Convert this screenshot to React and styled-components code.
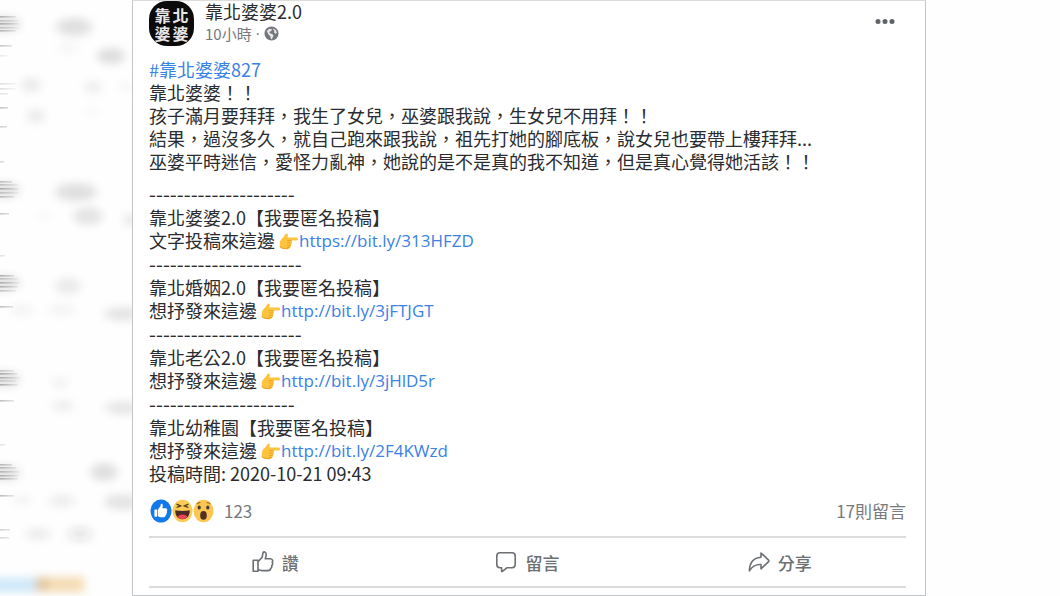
import React from 'react';
import styled, { createGlobalStyle } from 'styled-components';

const colors = {
  text: '#2a2c2f',
  muted: '#76797d',
  link: '#3a82e4',
  rule: '#dadbdd',
};

const GlobalStyle = createGlobalStyle`
  body {
    margin: 0;
    background: #fefefe;
    color: ${colors.text};
    font-family: 'Noto Sans CJK TC', 'Noto Sans', sans-serif;
    font-size: 18px;
    line-height: 23px;
  }
`;

const Page = styled.div`
  display: grid;
  grid-template-columns: 132px minmax(0, 1fr) 134px;
  align-items: start;
`;

const BackdropArt = styled.svg`
  display: block;
  width: 100%;
`;

const Card = styled.article`
  padding: 0 19px 7px 16px;
  background: #fff;
  border: 1px solid #c4c5c7;
  border-top-color: #dcdcdc;
`;

const Header = styled.header`
  display: flex;
  align-items: flex-start;
  height: 47px;
`;

const Avatar = styled.div`
  display: grid;
  grid-template-columns: 18px 18px;
  place-content: center;
  justify-items: center;
  width: 45px;
  height: 45px;
  margin-right: 11px;
  border-radius: 18px;
  background: #0b0b0b;
  color: #e6e6e6;
  font-size: 16px;
  font-weight: 700;
  line-height: 18px;
`;

const Author = styled.div`
  flex: 1;
`;

const Name = styled.h1`
  margin: 0;
  font-size: 18px;
  font-weight: 400;
  line-height: 20px;
`;

const Meta = styled.div`
  display: flex;
  align-items: center;
  gap: 4px;
  color: ${colors.muted};
  font-size: 15px;
  line-height: 25px;
`;

const Separator = styled.span`
  font-family: 'Open Sans', sans-serif;
`;

const MoreButton = styled.button`
  display: flex;
  margin: 0;
  padding: 16px 11px 8px;
  border: 0;
  background: none;
`;

const Message = styled.section`
  margin-top: ${(props) => props.$gap}px;
`;

const Line = styled.p`
  display: flex;
  flex-wrap: wrap;
  align-items: center;
  margin: 0;
  white-space: pre-wrap;
`;

const Divider = styled.p`
  margin: 0;
  font-size: 20px;
  line-height: 24px;
`;

const Link = styled.a`
  color: ${colors.link};
  text-decoration: none;
`;

const UrlLink = styled(Link)`
  font-family: 'Open Sans', 'Noto Sans', sans-serif;
  font-size: 17px;
`;

const Stats = styled.div`
  display: flex;
  align-items: center;
  height: 51px;
  color: ${colors.muted};
  font-size: 17px;
`;

const Reactions = styled.div`
  display: flex;
  flex: 1;
  align-items: center;
  padding-left: 1px;
`;

const Count = styled.span`
  margin-left: 10px;
`;

const Actions = styled.div`
  display: grid;
  grid-template-columns: repeat(3, 1fr);
  border-top: 2px solid ${colors.rule};
  border-bottom: 2px solid ${colors.rule};
`;

const ActionButton = styled.button`
  display: flex;
  align-items: center;
  justify-content: center;
  gap: 8px;
  height: 48px;
  padding: 0;
  border: 0;
  background: none;
  color: #6c6f73;
  font-family: inherit;
  font-size: 17px;
  font-weight: 500;
`;

// cx, cy, rx, ry, opacity
const smudges = [
  [74, 27, 18, 9, 0.12],
  [68, 48, 10, 6, 0.03],
  [111, 56, 14, 8, 0.13],
  [31, 85, 10, 7, 0.08],
  [93, 87, 9, 7, 0.06],
  [126, 87, 7, 5, 0.03],
  [36, 116, 9, 7, 0.08],
  [92, 112, 7, 4, 0.03],
  [76, 192, 21, 9, 0.12],
  [88, 216, 15, 9, 0.1],
  [44, 216, 8, 4, 0.03],
  [130, 220, 6, 6, 0.1],
  [68, 286, 13, 8, 0.08],
  [62, 310, 14, 6, 0.04],
  [22, 310, 12, 6, 0.04],
  [122, 314, 18, 7, 0.1],
  [60, 383, 8, 6, 0.05],
  [63, 406, 11, 6, 0.06],
  [122, 408, 17, 7, 0.09],
  [104, 472, 14, 9, 0.12],
  [62, 501, 13, 6, 0.07],
  [22, 500, 10, 5, 0.04],
  [122, 502, 18, 8, 0.1],
  [38, 534, 13, 6, 0.07],
  [80, 534, 12, 7, 0.11],
];

// y, length, opacity
const streaks = [
  [17, 16, 0.55], [21, 18, 0.35], [24, 20, 0.55], [28, 20, 0.35], [31, 16, 0.5],
  [46, 12, 0.45], [56, 7, 0.15], [84, 16, 0.25], [89, 16, 0.25], [94, 8, 0.2],
  [108, 8, 0.45], [127, 7, 0.35], [162, 4, 0.3],
  [182, 12, 0.45], [185, 18, 0.4], [189, 18, 0.55], [193, 18, 0.35], [197, 14, 0.45],
  [214, 9, 0.4], [256, 5, 0.2],
  [276, 14, 0.55], [279, 18, 0.4], [283, 20, 0.5], [287, 18, 0.5], [291, 16, 0.4],
  [307, 13, 0.5], [371, 14, 0.4], [374, 17, 0.6], [378, 20, 0.5], [381, 16, 0.3],
  [385, 18, 0.55], [401, 14, 0.5], [445, 5, 0.2],
  [465, 12, 0.5], [468, 16, 0.5], [472, 19, 0.45], [476, 18, 0.5], [479, 18, 0.55],
  [496, 14, 0.5], [530, 10, 0.35], [538, 9, 0.3],
];

function Backdrop() {
  return (
    <BackdropArt viewBox="0 0 132 596" aria-hidden="true">
      <defs>
        <filter id="smudge" x="-60%" y="-100%" width="220%" height="300%">
          <feGaussianBlur stdDeviation="5 4" />
        </filter>
        <linearGradient id="streak" gradientUnits="userSpaceOnUse" x1="0" x2="22">
          <stop offset="0" stopColor="#666" />
          <stop offset="1" stopColor="#666" stopOpacity="0" />
        </linearGradient>
      </defs>
      <g filter="url(#smudge)">
        {smudges.map(([cx, cy, rx, ry, opacity]) => (
          <ellipse key={`${cx}-${cy}`} cx={cx} cy={cy} rx={rx} ry={ry} fill="#222" opacity={opacity} />
        ))}
        <rect x="-8" y="578" width="44" height="14" fill="#b9def8" opacity="0.7" />
        <rect x="36" y="577" width="48" height="15" fill="#f0cf99" opacity="0.75" />
        <ellipse cx="42" cy="584" rx="7" ry="7" fill="#c4a27c" opacity="0.4" />
      </g>
      {[24, 190, 283, 379, 473].map((y) => (
        <ellipse key={y} cx="4" cy={y} rx="16" ry="8" fill="#222" opacity="0.12" filter="url(#smudge)" />
      ))}
      {streaks.map(([y, length, opacity]) => (
        <rect key={y} x="0" y={y - 1} width={length} height="1.6" fill="url(#streak)" opacity={opacity * 0.85} />
      ))}
    </BackdropArt>
  );
}

function GlobeIcon() {
  return (
    <svg width="15" height="15" viewBox="0 0 16 16" aria-hidden="true">
      <circle cx="8" cy="8" r="7.5" fill="#74777c" />
      <path d="M3 5.2 5.800 3l2.600.4-.6 2-2 .8.2 1.600 2.600.8 1.600 1.400-1.600 3.600-1.200.6-.6-3.400L4.600 8.800Z" fill="#e9eaec" />
      <path d="m10.200 2.600 2.600 2 .9 3-1.500.6-1.600-1.600.6-1.600-1.400-.9Z" fill="#e9eaec" />
    </svg>
  );
}

function DotsIcon() {
  return (
    <svg width="20" height="9" viewBox="0 0 20 9" fill="#606469" aria-hidden="true">
      <circle cx="3" cy="4.500" r="2.500" />
      <circle cx="10" cy="4.500" r="2.500" />
      <circle cx="17" cy="4.500" r="2.500" />
    </svg>
  );
}

function PointingHand() {
  return (
    <svg width="20" height="18" viewBox="0 0 20 18" role="img" aria-label="👉">
      <path d="M1 9.500C2 7 4.500 5.500 6.400 2.200 7 1 8.900 1.300 8.900 3L8.500 5.600H17.700C19.600 5.600 19.600 8.600 17.700 8.600H12.400C13.300 9.300 13.200 10.600 12.300 11 13 11.800 12.700 13 11.800 13.400 12.300 14.300 11.800 15.300 10.900 15.500 10.700 16.700 9.600 17 8.400 17H5C3 17 1.600 16 .6 15Z" fill="#fcc43e" />
      <path d="M8 8.600h4.400M8.200 11h4.100M8 13.400h3.800M7.800 15.500h3.100" stroke="#e39a25" strokeWidth="0.8" fill="none" />
      <path d="M1 14.500C3 16.500 6 16.800 9 16.800" stroke="#e39a25" strokeWidth="0.8" fill="none" />
    </svg>
  );
}

const thumb = 'M7 10.500 10.600 6.200 11.100 3.400C11.400 2.200 14 2.400 14 4.900 14 6.500 13.500 7.800 13.200 8.800H18.200C20.600 8.800 21 11.500 19.600 12.300 20.600 13.300 20.200 15 19 15.500 19.500 16.800 18.900 18 17.800 18.300 18 19.600 17.100 20.500 15.700 20.500H11.600C9.800 20.500 8.500 19.700 7 19.200Z';

function LikeBadge() {
  return (
    <svg width="22" height="24" viewBox="0 0 22 24" aria-hidden="true">
      <ellipse cx="11" cy="12" rx="10.500" ry="11.500" fill="#1479e8" />
      <g transform="translate(3 2.600) scale(0.700 0.760)" fill="#fff">
        <path d={thumb} />
        <rect x="2" y="10.500" width="4" height="9.500" rx="1" />
      </g>
    </svg>
  );
}

function HahaBadge() {
  return (
    <svg width="21" height="24" viewBox="0 0 21 24" aria-hidden="true">
      <ellipse cx="10.500" cy="12" rx="10" ry="11.300" fill="#fbcb55" />
      <path d="m4.600 5.200 4 1.700-4 1.600M16.400 5.200l-4 1.700 4 1.600" stroke="#4b3825" strokeWidth="1.300" fill="none" />
      <path d="M3.300 11.300c4 .8 10.400.8 14.400 0 .4 5-2.600 9-7.200 9s-7.600-4-7.200-9Z" fill="#4c2a27" />
      <path d="M5.600 17.600c2.400-2.700 7.400-2.700 9.800 0-2.600 3.600-7.200 3.600-9.800 0Z" fill="#ee4257" />
    </svg>
  );
}

function WowBadge() {
  return (
    <svg width="21" height="24" viewBox="0 0 21 24" aria-hidden="true">
      <ellipse cx="10.500" cy="12" rx="10" ry="11.300" fill="#fbc751" />
      <path d="M3.800 5.200q1.600-2 3.600-1.400M13.600 3.800q2-.6 3.600 1.400" stroke="#a36d24" strokeWidth="1.100" fill="none" />
      <ellipse cx="6.200" cy="8.600" rx="1.600" ry="2" fill="#433c3a" />
      <ellipse cx="14.800" cy="8.600" rx="1.600" ry="2" fill="#433c3a" />
      <ellipse cx="10.500" cy="16.400" rx="3.300" ry="4.400" fill="#53301f" />
    </svg>
  );
}

function LikeIcon() {
  return (
    <svg width="22" height="24" viewBox="1 0 22 24" fill="none" stroke="currentColor" strokeWidth="1.600" strokeLinejoin="round" aria-hidden="true">
      <path d="M2.200 10.200H7V21.200H2.200ZM7 11.600 11.200 7.200 12 2.800C12.400 1.200 15.200 1.700 15.200 4.400 15.200 6 14.700 7.400 14.300 8.800H19.300C21.500 8.800 22.200 10.800 21.200 12.200 21.900 13.500 21.600 14.800 20.700 15.600 21.100 16.800 20.600 17.800 19.700 18.400 19.600 20 18.600 20.600 17 20.600H11.600C9.600 20.600 8.600 19.900 7 19.500" />
    </svg>
  );
}

function CommentIcon() {
  return (
    <svg width="22" height="24" viewBox="0 0 22 24" fill="none" stroke="currentColor" strokeWidth="1.600" strokeLinejoin="round" aria-hidden="true">
      <path d="M5 2.800H17Q20.200 2.800 20.200 6V14.600Q20.200 17.800 17 17.800H11.800L7.400 21.400Q6.600 21.900 6.600 20.900V17.800H5Q1.800 17.800 1.800 14.600V6Q1.800 2.800 5 2.800Z" />
    </svg>
  );
}

function ShareIcon() {
  return (
    <svg width="22" height="24" viewBox="0 0 22 24" fill="none" stroke="currentColor" strokeWidth="1.600" strokeLinejoin="round" aria-hidden="true">
      <path d="M13 3 20.600 10.200Q21.200 10.900 20.600 11.600L13 18.800V14.600C8 14.200 4.300 16.200 1.400 20.800 1.600 13 5.400 7.800 13 7.200Z" />
    </svg>
  );
}

const story = [
  '靠北婆婆！！',
  '孩子滿月要拜拜，我生了女兒，巫婆跟我說，生女兒不用拜！！',
  '結果，過沒多久，就自己跑來跟我說，祖先打她的腳底板，說女兒也要帶上樓拜拜...',
  '巫婆平時迷信，愛怪力亂神，她說的是不是真的我不知道，但是真心覺得她活該！！',
];

const groups = [
  { title: '靠北婆婆2.0【我要匿名投稿】', label: '文字投稿來這邊 ', url: 'https://bit.ly/313HFZD', dashes: 21 },
  { title: '靠北婚姻2.0【我要匿名投稿】', label: '想抒發來這邊 ', url: 'http://bit.ly/3jFTJGT', dashes: 22 },
  { title: '靠北老公2.0【我要匿名投稿】', label: '想抒發來這邊 ', url: 'http://bit.ly/3jHlD5r', dashes: 22 },
  { title: '靠北幼稚園【我要匿名投稿】', label: '想抒發來這邊 ', url: 'http://bit.ly/2F4KWzd', dashes: 21 },
];

function App() {
  return (
    <Page lang="zh-Hant">
      <GlobalStyle />
      <Backdrop />
      <Card>
        <Header>
          <Avatar>
            <span>靠</span>
            <span>北</span>
            <span>婆</span>
            <span>婆</span>
          </Avatar>
          <Author>
            <Name>靠北婆婆2.0</Name>
            <Meta>
              <span>10小時</span>
              <Separator>·</Separator>
              <GlobeIcon />
            </Meta>
          </Author>
          <MoreButton type="button" aria-label="更多">
            <DotsIcon />
          </MoreButton>
        </Header>

        <Message $gap={10}>
          <Line>
            <Link href="#827">#靠北婆婆827</Link>
          </Line>
          {story.map((line) => (
            <Line key={line}>{line}</Line>
          ))}
        </Message>

        <Message $gap={9}>
          {groups.map((group) => (
            <React.Fragment key={group.url}>
              <Divider>{'-'.repeat(group.dashes)}</Divider>
              <Line>{group.title}</Line>
              <Line>
                <span>{group.label}</span>
                <PointingHand />
                <UrlLink href={group.url}>{group.url}</UrlLink>
              </Line>
            </React.Fragment>
          ))}
          <Line>投稿時間: 2020-10-21 09:43</Line>
        </Message>

        <Stats>
          <Reactions>
            <LikeBadge />
            <HahaBadge />
            <WowBadge />
            <Count>123</Count>
          </Reactions>
          <span>17則留言</span>
        </Stats>

        <Actions>
          <ActionButton type="button">
            <LikeIcon />
            讚
          </ActionButton>
          <ActionButton type="button">
            <CommentIcon />
            留言
          </ActionButton>
          <ActionButton type="button">
            <ShareIcon />
            分享
          </ActionButton>
        </Actions>
      </Card>
    </Page>
  );
}

export default App;
